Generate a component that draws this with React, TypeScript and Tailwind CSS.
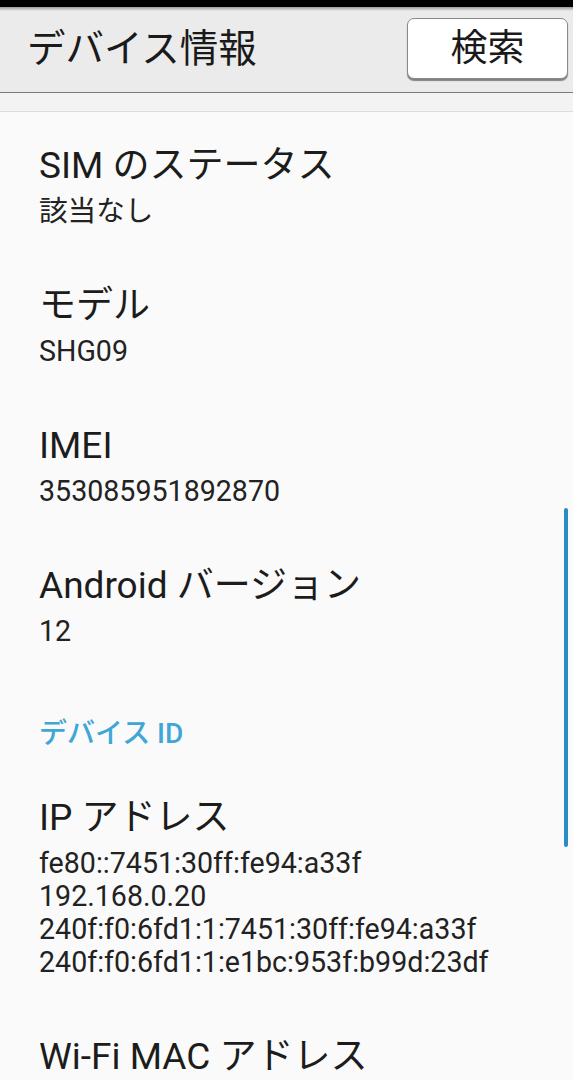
import React from "react";

const font = { fontFamily: "Roboto, 'Noto Sans CJK JP', sans-serif" };

type Item = { title: string; values: string[] };

const topItems: Item[] = [
  { title: "SIM のステータス", values: ["該当なし"] },
  { title: "モデル", values: ["SHG09"] },
  { title: "IMEI", values: ["353085951892870"] },
  { title: "Android バージョン", values: ["12"] },
];

const idItems: Item[] = [
  {
    title: "IP アドレス",
    values: [
      "fe80::7451:30ff:fe94:a33f",
      "192.168.0.20",
      "240f:f0:6fd1:1:7451:30ff:fe94:a33f",
      "240f:f0:6fd1:1:e1bc:953f:b99d:23df",
    ],
  },
  { title: "Wi-Fi MAC アドレス", values: [] },
];

function Row({ item }: { item: Item }) {
  return (
    <div className="px-[39px] pt-[30px] pb-[24px]">
      <div className="text-[37px] leading-[48px] text-[#1c1c1c]">{item.title}</div>
      {item.values.length > 0 && (
        <div className="mt-[5px] flex flex-col">
          {item.values.map((v) => (
            <div key={v} className="text-[28.6px] leading-[33px] text-[#222]">
              {v}
            </div>
          ))}
        </div>
      )}
    </div>
  );
}

export default function App() {
  return (
    <div className="relative w-[573px] h-[1080px] overflow-hidden bg-[#fafafa]" style={font}>
      {/* status bar edge */}
      <div className="h-[7px] bg-black" />
      {/* action bar */}
      <div className="relative flex h-[86px] items-center justify-between bg-[#ebebeb] pl-[27px] pr-[5px] border-b border-[#7a7a7a]">
        <div className="pointer-events-none absolute inset-x-0 top-0 h-[4px] bg-gradient-to-b from-[#9a9a9a] to-transparent" />
        <h1 className="text-[38.5px] leading-none text-[#1a1a1a]">デバイス情報</h1>
        <button className="flex h-[61px] w-[161px] items-center justify-center rounded-[7px] border border-[#8a8a8a] bg-white shadow-[0_2px_1px_rgba(0,0,0,0.45)] text-[37px] leading-none text-[#1a1a1a] -mt-[2px]">
          検索
        </button>
      </div>
      <div className="h-[19px] bg-[#f3f3f3] border-b border-[#dcdcdc]" />

      {/* list */}
      <div className="flex flex-col">
        {topItems.map((it) => (
          <Row key={it.title} item={it} />
        ))}
        <div className="px-[39px] pt-[44px] pb-[12px]">
          <div className="text-[28px] leading-[36px] font-medium text-[#3fa7d6]">デバイス ID</div>
        </div>
        {idItems.map((it) => (
          <Row key={it.title} item={it} />
        ))}
      </div>

      {/* scrollbar */}
      <div className="absolute left-[564px] top-[508px] h-[339px] w-[4px] rounded-full bg-[#2a8cc4]" />
    </div>
  );
}
